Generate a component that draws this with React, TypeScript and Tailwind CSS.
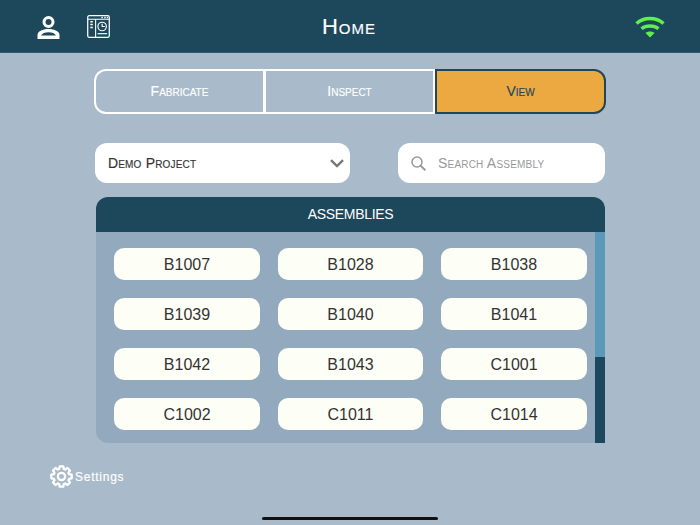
import React from 'react'

const assemblies = [
    'B1007', 'B1028', 'B1038',
    'B1039', 'B1040', 'B1041',
    'B1042', 'B1043', 'C1001',
    'C1002', 'C1011', 'C1014',
]

// eight teeth, each one a flat top on a ring
const gearPoints = () => {
    const points: string[] = []
    for (let i = 0; i < 8; i++) {
        const mid = (i * Math.PI) / 4 - Math.PI / 2
        const corners: [number, number][] = [[8.2, -0.3], [10.8, -0.17], [10.8, 0.17], [8.2, 0.3]]
        corners.forEach(([r, a]) => {
            points.push(`${(12 + r * Math.cos(mid + a)).toFixed(2)},${(12 + r * Math.sin(mid + a)).toFixed(2)}`)
        })
    }
    return points.join(' ')
}

const UserIcon = () => (
    <svg width="23" height="23" viewBox="0 0 23 23" fill="none" className="mt-[2px]">
        <circle cx="11.5" cy="6" r="4.5" stroke="white" strokeWidth="3" />
        <path d="M0.5 23V19C0.5 15.5 5.5 13 11.5 13C17.5 13 22.5 15.5 22.5 19V23Z" fill="white" />
        <path d="M4 19.6C5 17.4 8 16.2 11.5 16.2C15 16.2 18 17.4 19 19.6Z" fill="#1d485c" />
    </svg>
)

const DashboardIcon = () => (
    <svg width="23" height="23" viewBox="0 0 24 24" fill="none" stroke="white">
        <rect x="0.75" y="0.75" width="22.5" height="22.5" rx="1.5" strokeWidth="1.3" />
        <path d="M1 4.5H23M9 4.5V23" strokeWidth="1.1" />
        <path d="M15 2.6H16.5M18 2.6H19.5M20.6 2.6H22" strokeWidth="1.5" />
        <path d="M3.5 7H6M3.5 10H6M3.5 13H6" strokeWidth="1.5" />
        <circle cx="15.8" cy="12" r="4.4" strokeWidth="1.2" />
        <path d="M15.8 9V12H18.6" strokeWidth="1.2" />
        <path d="M11 19.5H21" strokeWidth="1.2" />
    </svg>
)

const WifiIcon = () => (
    <svg width="30" height="22" viewBox="0 0 30 22" fill="none" stroke="#5ff04a" strokeWidth="3.4" className="mt-[2px]">
        <path d="M1.5 7.5C9 0.8 21 0.8 28.5 7.5" />
        <path d="M6.5 12.8C11 9 19 9 23.5 12.8" />
        <path d="M10.5 17L15 21.5L19.5 17C17 15 13 15 10.5 17Z" fill="#5ff04a" stroke="none" />
    </svg>
)

const GearIcon = () => (
    <svg width="23" height="23" viewBox="0 0 24 24" fill="none" stroke="white" strokeWidth="2.4" strokeLinejoin="round">
        <polygon points={gearPoints()} />
        <circle cx="12" cy="12" r="3.8" />
    </svg>
)

const App = () => {
    return (
        <div className="w-[700px] h-[525px] flex flex-col bg-[#a9bbca] overflow-hidden font-['Liberation_Sans',sans-serif]">
            <header className="h-[53px] shrink-0 bg-[#1d485c] border-b border-[#2c5a70] grid grid-cols-[1fr_auto_1fr] items-center pl-[37px] pr-[35px]">
                <div className="flex items-center gap-[27px]">
                    <UserIcon />
                    <DashboardIcon />
                </div>
                <h1 className="-ml-[4px] text-white text-[22px] tracking-[1px] [font-variant-caps:small-caps] [-webkit-text-stroke:0.15px_white]">Home</h1>
                <div className="justify-self-end">
                    <WifiIcon />
                </div>
            </header>

            <main className="flex-1 flex flex-col">
                <div className="mt-[16px] ml-[94px] w-[512px] h-[45px] flex text-[14px] [font-variant-caps:small-caps] [-webkit-text-stroke:0.15px]">
                    <button className="w-[171px] border-2 border-white rounded-l-[12px] text-white">Fabricate</button>
                    <button className="w-[170px] border-2 border-l border-white text-white">Inspect</button>
                    <button className="w-[171px] border-2 border-[#1d485c] rounded-r-[12px] bg-[#eca942] text-[#1d485c]">View</button>
                </div>

                <div className="mt-[29px] ml-[95px] w-[510px] flex justify-between">
                    <div className="w-[255px] h-[40px] bg-white rounded-[12px] flex items-center justify-between pl-[13px] pr-[6px]">
                        <span className="text-[#333333] text-[14px] tracking-[0.17px] [font-variant-caps:small-caps] [-webkit-text-stroke:0.15px]">Demo Project</span>
                        <svg width="14" height="9" viewBox="0 0 14 9" fill="none" stroke="#777777" strokeWidth="2.4">
                            <path d="M1 1.2L7 7L13 1.2" />
                        </svg>
                    </div>
                    <div className="w-[207px] h-[40px] bg-white rounded-[12px] flex items-center pl-[13px]">
                        <svg width="15" height="15" viewBox="0 0 15 15" fill="none" stroke="#999999" strokeWidth="1.5">
                            <circle cx="6" cy="6" r="5" />
                            <path d="M9.6 9.6L14.3 14.3" strokeWidth="2" />
                        </svg>
                        <span className="ml-[12px] text-[#999999] text-[14px] tracking-[0.2px] [font-variant-caps:small-caps]">Search Assembly</span>
                    </div>
                </div>

                <section className="mt-[14px] ml-[96px] w-[509px] h-[246px] flex flex-col">
                    <div className="h-[35px] shrink-0 bg-[#1d485c] rounded-t-[12px] flex items-center justify-center text-white text-[14px] tracking-[-0.3px]">
                        ASSEMBLIES
                    </div>
                    <div className="flex-1 flex bg-[#93a9bd] rounded-bl-[12px]">
                        <div className="flex-1 pt-[16px] pl-[18px] grid grid-cols-[146px_145px_146px] gap-x-[18px] gap-y-[18px] content-start">
                            {assemblies.map((name) => (
                                <button
                                    key={name}
                                    className="h-[32px] pt-[1px] rounded-[10px] bg-[#fdfef6] text-[#333333] text-[16px]"
                                >
                                    {name}
                                </button>
                            ))}
                        </div>
                        <div className="w-[10px] flex flex-col">
                            <div className="h-[125px] bg-[#5a9ab8]" />
                            <div className="flex-1 bg-[#1d485c]" />
                        </div>
                    </div>
                </section>

                <div className="mt-[22px] ml-[50px] flex items-center">
                    <GearIcon />
                    <span className="ml-[2px] text-white text-[12px] tracking-[0.75px] [-webkit-text-stroke:0.15px_white]">Settings</span>
                </div>

                <div className="mt-[29px] self-center w-[176px] h-[3px] rounded-full bg-[#111111]" />
            </main>
        </div>
    )
}

export default App
